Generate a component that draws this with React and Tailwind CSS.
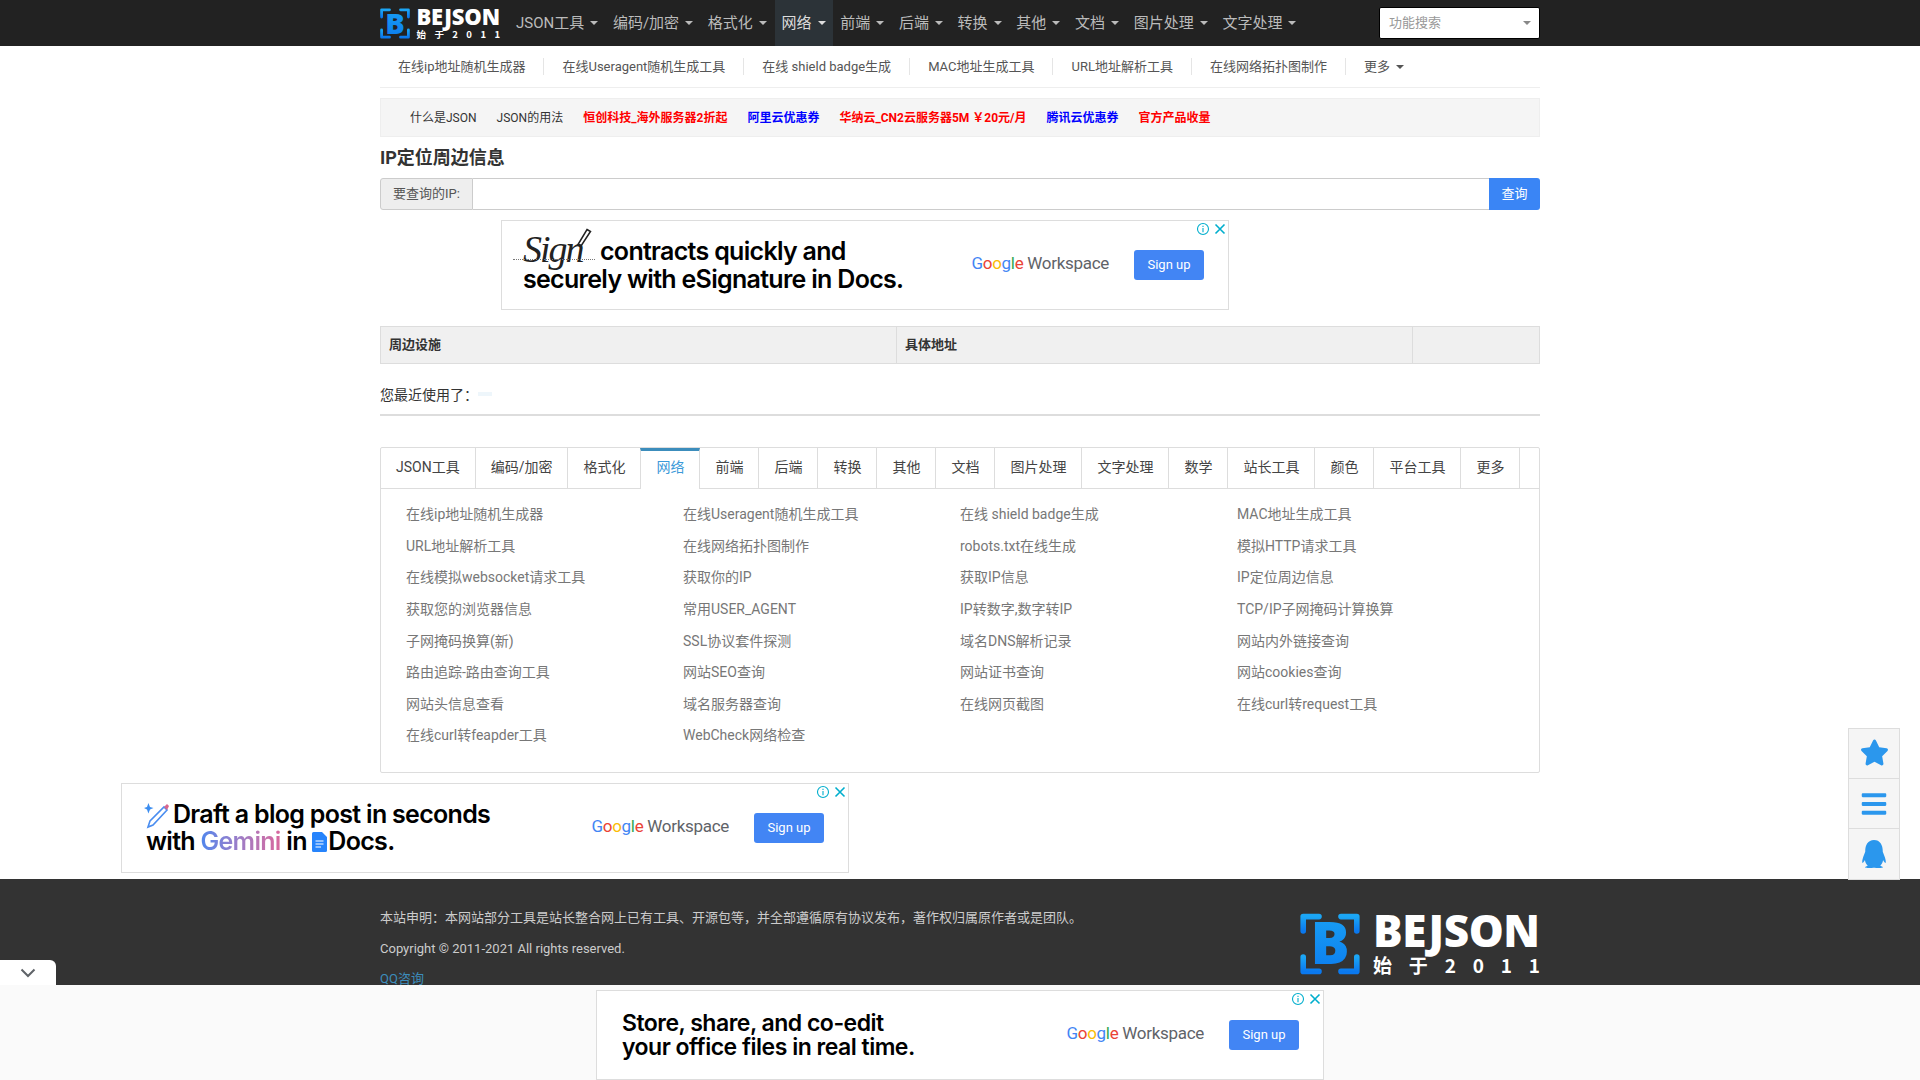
import React from "react";
import { FaStar, FaBars, FaQq } from "react-icons/fa";

const navItems = ["JSON工具", "编码/加密", "格式化", "网络", "前端", "后端", "转换", "其他", "文档", "图片处理", "文字处理"];
const subItems = ["在线ip地址随机生成器", "在线Useragent随机生成工具", "在线 shield badge生成", "MAC地址生成工具", "URL地址解析工具", "在线网络拓扑图制作"];
const tabs = ["JSON工具", "编码/加密", "格式化", "网络", "前端", "后端", "转换", "其他", "文档", "图片处理", "文字处理", "数学", "站长工具", "颜色", "平台工具", "更多"];
const tools = [
  "在线ip地址随机生成器", "在线Useragent随机生成工具", "在线 shield badge生成", "MAC地址生成工具",
  "URL地址解析工具", "在线网络拓扑图制作", "robots.txt在线生成", "模拟HTTP请求工具",
  "在线模拟websocket请求工具", "获取你的IP", "获取IP信息", "IP定位周边信息",
  "获取您的浏览器信息", "常用USER_AGENT", "IP转数字,数字转IP", "TCP/IP子网掩码计算换算",
  "子网掩码换算(新)", "SSL协议套件探测", "域名DNS解析记录", "网站内外链接查询",
  "路由追踪-路由查询工具", "网站SEO查询", "网站证书查询", "网站cookies查询",
  "网站头信息查看", "域名服务器查询", "在线网页截图", "在线curl转request工具",
  "在线curl转feapder工具", "WebCheck网络检查",
];

function Caret() {
  return <span className="inline-block w-0 h-0 ml-[6px] border-t-[4px] border-x-[4px] border-t-current border-x-transparent"></span>;
}

function Logo({ className }) {
  return (
    <svg viewBox="0 0 120 31" className={"overflow-visible " + className}>
      <defs>
        <linearGradient id="logoBlue" x1="0" y1="0" x2="0" y2="1">
          <stop offset="0" stopColor="#1ba6f5" />
          <stop offset="1" stopColor="#0a78ee" />
        </linearGradient>
      </defs>
      <g fill="none" stroke="url(#logoBlue)" strokeWidth="2.8" strokeLinecap="round" strokeLinejoin="round">
        <path d="M9.5 1.800H1.600V9" />
        <path d="M20.500 1.800H28.400V9" />
        <path d="M9.500 29.200H1.600V22" />
        <path d="M20.500 29.200H28.400V22" />
      </g>
      <text x="15" y="25.500" textAnchor="middle" fill="url(#logoBlue)" fontSize="29" fontWeight="900" fontFamily="'Noto Sans', sans-serif">B</text>
      <text x="36.500" y="17" textLength="83.500" lengthAdjust="spacing" fill="#fff" fontSize="22" fontWeight="900" fontFamily="'Noto Sans', sans-serif">BEJSON</text>
      <text x="36.500" y="30" textLength="83.500" lengthAdjust="spacing" fill="#fff" fontSize="9.500" fontWeight="700" fontFamily="'Noto Sans CJK SC', sans-serif">始 于 2 0 1 1</text>
    </svg>
  );
}

function GoogleWorkspace() {
  return (
    <div className="mb-[4px] text-[17px] leading-none tracking-[-0.3px] whitespace-nowrap font-['Roboto',sans-serif]">
      <span className="text-[#4285f4]">G</span>
      <span className="text-[#ea4335]">o</span>
      <span className="text-[#fbbc05]">o</span>
      <span className="text-[#4285f4]">g</span>
      <span className="text-[#34a853]">l</span>
      <span className="text-[#ea4335]">e</span>
      <span className="text-[#5f6368]"> Workspace</span>
    </div>
  );
}

function Ad({ children, className, textClass }) {
  return (
    <div className={"relative flex items-center w-[728px] h-[90px] bg-white border border-[#ddd] " + className}>
      <div className="absolute top-[1px] right-[1px] flex items-center gap-[3px] text-[#00aecd]">
        <svg width="14" height="14" viewBox="0 0 14 14" fill="none" stroke="currentColor" strokeWidth="1.1">
          <circle cx="7" cy="7" r="5.500" />
          <path d="M7 6v4.200M7 3.800v1.200" />
        </svg>
        <svg width="14" height="14" viewBox="0 0 14 14" fill="none" stroke="currentColor" strokeWidth="1.600">
          <path d="M2.500 2.500l9 9M11.500 2.500l-9 9" />
        </svg>
      </div>
      <div className={"flex-1 min-w-0 font-semibold text-black font-['Inter',sans-serif] " + textClass}>
        {children}
      </div>
      <GoogleWorkspace />
      <div className="ml-[25px] mr-[24px] w-[70px] h-[30px] rounded-[3px] bg-[#4285f4] text-white text-[13px] flex items-center justify-center">Sign up</div>
    </div>
  );
}

export default function App() {
  return (
    <div className="relative h-screen overflow-hidden bg-white text-[#333] font-['Roboto','Noto_Sans_CJK_SC',sans-serif]">
      <nav className="h-[46px] bg-[#222]">
        <div className="w-[1160px] mx-auto h-full flex items-center">
          <Logo className="w-[120px] h-[31px] shrink-0" />
          <div className="flex h-full ml-[9px] text-[15px] text-[#bbb]">
            {navItems.map((n) => (
              <div key={n} className={"flex items-center pl-[7px] pr-[7.700px] whitespace-nowrap " + (n === "网络" ? "bg-[#2c3338] text-[#ddd]" : "")}>
                {n}<Caret />
              </div>
            ))}
          </div>
          <div className="ml-auto w-[161px] h-[32px] bg-white border border-black rounded-[2px] flex items-center justify-between pl-[9px] pr-[8px] text-[13px] text-[#999]">
            功能搜索
            <span className="w-0 h-0 border-t-[4px] border-x-[4px] border-t-[#888] border-x-transparent"></span>
          </div>
        </div>
      </nav>

      <div className="w-[1160px] mx-auto">
        <div className="h-[42px] flex items-center border-b border-[#eee] text-[13px] text-[#555]">
          {subItems.map((s) => (
            <div key={s} className="h-[17px] flex items-center px-[18px] border-r border-[#e5e5e5] whitespace-nowrap">{s}</div>
          ))}
          <div className="flex items-center px-[18px]">更多<Caret /></div>
        </div>

        <div className="mt-[10px] h-[39px] flex items-center pl-[29px] gap-[20px] bg-[#f5f5f5] border border-[#eee] text-[12px] text-[#333] whitespace-nowrap">
          <span>什么是JSON</span>
          <span>JSON的用法</span>
          <span className="font-bold text-[#f00]">恒创科技_海外服务器2折起</span>
          <span className="font-bold text-[#00f]">阿里云优惠券</span>
          <span className="font-bold text-[#f00]">华纳云_CN2云服务器5M ￥20元/月</span>
          <span className="font-bold text-[#00f]">腾讯云优惠券</span>
          <span className="font-bold text-[#f00]">官方产品收量</span>
        </div>

        <h1 className="h-[40px] flex items-center text-[18px] font-bold text-[#333]">IP定位周边信息</h1>

        <div className="mt-[1px] h-[32px] flex text-[13px]">
          <div className="w-[93px] flex items-center justify-center bg-[#eee] border border-[#ccc] rounded-l-[3px] text-[#555]">要查询的IP:</div>
          <div className="flex-1 border-y border-[#ccc] bg-white"></div>
          <div className="w-[51px] flex items-center justify-center bg-[#3a85f5] text-white rounded-r-[3px]">查询</div>
        </div>

        <Ad className="mt-[10px] ml-[121px]" textClass="pl-[21px] text-[25px] leading-[28px] tracking-[-0.700px]">
          <div className="flex items-end">
            <div className="relative w-[77px] h-[28px] shrink-0">
              <span className="absolute left-[0px] top-[-8px] text-[38px] leading-[40px] font-normal italic tracking-[-2px] text-[#222] font-['Liberation_Serif',serif]">Sign</span>
              <svg className="absolute left-[51px] top-[-9px]" width="18" height="20" viewBox="0 0 18 20" fill="none" stroke="#222" strokeWidth="1.500">
                <path d="M13 1.500l3.500 2L7 18l-3-1.500z" />
              </svg>
              <div className="absolute left-[-10px] w-[82px] top-[22px] border-t border-dotted border-[#777]"></div>
            </div>
            <span className="whitespace-nowrap">contracts quickly and</span>
          </div>
          <div className="whitespace-nowrap">securely with eSignature in Docs.</div>
        </Ad>

        <div className="mt-[16px] h-[38px] flex bg-[#f0f0f0] border border-[#ddd] text-[13px] font-bold text-[#333]">
          <div className="w-[516px] flex items-center pl-[8px] border-r border-[#ddd]">周边设施</div>
          <div className="w-[516px] flex items-center pl-[8px] border-r border-[#ddd]">具体地址</div>
          <div className="flex-1"></div>
        </div>

        <div className="h-[50px] pt-[22px] flex items-start text-[14px] leading-[18px] text-[#333]">
          您最近使用了：
          <span className="ml-[0px] mt-[6px] w-[14px] h-[4px] bg-[#eef6fb]"></span>
        </div>
        <div className="h-[2px] bg-[#ddd]"></div>

        <div className="mt-[31px] h-[326px] border border-[#ddd] rounded-[2px]">
          <div className="flex h-[41px] border-b border-[#ddd] text-[14px] text-[#444]">
            {tabs.map((t) => (
              <div
                key={t}
                className={
                  "h-[41px] flex items-center px-[15px] border-r border-[#ddd] whitespace-nowrap " +
                  (t === "网络" ? "bg-white border-t-[3px] border-t-[#3c8dbc] border-l border-l-[#ddd] text-[#3c9ad9] ml-[-1px] pb-[5px]" : "pb-[2px]")
                }
              >
                {t}
              </div>
            ))}
          </div>
          <div className="grid grid-cols-[277px_277px_277px_277px] auto-rows-[31.6px] pl-[25px] pt-[10px] text-[14px] text-[#777]">
            {tools.map((t) => (
              <div key={t} className="flex items-center whitespace-nowrap">{t}</div>
            ))}
          </div>
        </div>
      </div>

      <Ad className="mt-[10px] ml-[121px]" textClass="pl-[24px] text-[25px] leading-[27px] tracking-[-0.700px]">
        <div className="flex items-center whitespace-nowrap">
          <svg width="29" height="30" viewBox="0 0 29 30" className="shrink-0 ml-[-2px] my-[-2px]">
            <path d="M3 7l1.400-4L6 7l3.500 1L6 9.500l-1.600 4-1.400-4L0 8z" fill="#3b8df0" />
            <path d="M4 27l2-6L20 7l3 3L9 25z" fill="none" stroke="#4a8df0" strokeWidth="1.600" />
            <path d="M20 7l3-3 2 2-2 4z" fill="#d9668c" />
          </svg>
          Draft a blog post in seconds
        </div>
        <div className="flex items-center whitespace-nowrap">
          with&nbsp;<span className="bg-linear-to-r from-[#4f86ec] to-[#d9669c] bg-clip-text text-transparent">Gemini</span>&nbsp;in&nbsp;
          <svg width="15" height="20" viewBox="0 0 15 20" className="shrink-0 mr-[1px]">
            <path d="M0 1.500A1.500 1.500 0 0 1 1.500 0H10l5 5v13.500a1.500 1.500 0 0 1-1.500 1.500h-12A1.500 1.500 0 0 1 0 18.500z" fill="#2684fc" />
            <path d="M3.500 9h8M3.500 12h8M3.500 15h5.500" stroke="#fff" strokeWidth="1.200" />
          </svg>
          Docs.
        </div>
      </Ad>

      <footer className="mt-[6px] h-[300px] bg-[#333]">
        <div className="w-[1160px] mx-auto flex justify-between text-[13px] text-[#ccc]">
          <div className="pt-[30px] flex flex-col gap-[12.5px] leading-[18px]">
            <div>本站申明：本网站部分工具是站长整合网上已有工具、开源包等，并全部遵循原有协议发布，著作权归属原作者或是团队。</div>
            <div>Copyright © 2011-2021 All rights reserved.</div>
            <div className="text-[#3c8dbc]">QQ咨询</div>
          </div>
          <Logo className="w-[240px] h-[62px] mt-[34px] shrink-0" />
        </div>
      </footer>

      <div className="absolute left-0 right-0 bottom-0 h-[95px] bg-[#fafafa] flex justify-center pt-[5px]">
        <Ad textClass="pl-[25px] text-[23px] leading-[24px] tracking-[-0.500px]">
          <div className="whitespace-nowrap">Store, share, and co-edit</div>
          <div className="whitespace-nowrap">your office files in real time.</div>
        </Ad>
        <div className="absolute left-0 top-[-25px] w-[56px] h-[25px] bg-white rounded-tr-[6px] flex items-center justify-center">
          <svg width="16" height="10" viewBox="0 0 16 10" fill="none" stroke="#5f6368" strokeWidth="2">
            <path d="M1.500 1.500L8 8l6.500-6.500" />
          </svg>
        </div>
      </div>

      <div className="absolute left-[1848px] top-[728px] w-[52px] flex flex-col bg-[#f5f5f5] border border-[#ddd] text-[#2b97ed]">
        <div className="h-[50px] flex items-center justify-center border-b border-[#ddd]"><FaStar className="text-[29px] mt-[-2px]" /></div>
        <div className="h-[50px] flex items-center justify-center border-b border-[#ddd]"><FaBars className="text-[28px]" /></div>
        <div className="h-[50px] flex items-center justify-center"><FaQq className="text-[28px]" /></div>
      </div>
    </div>
  );
}
